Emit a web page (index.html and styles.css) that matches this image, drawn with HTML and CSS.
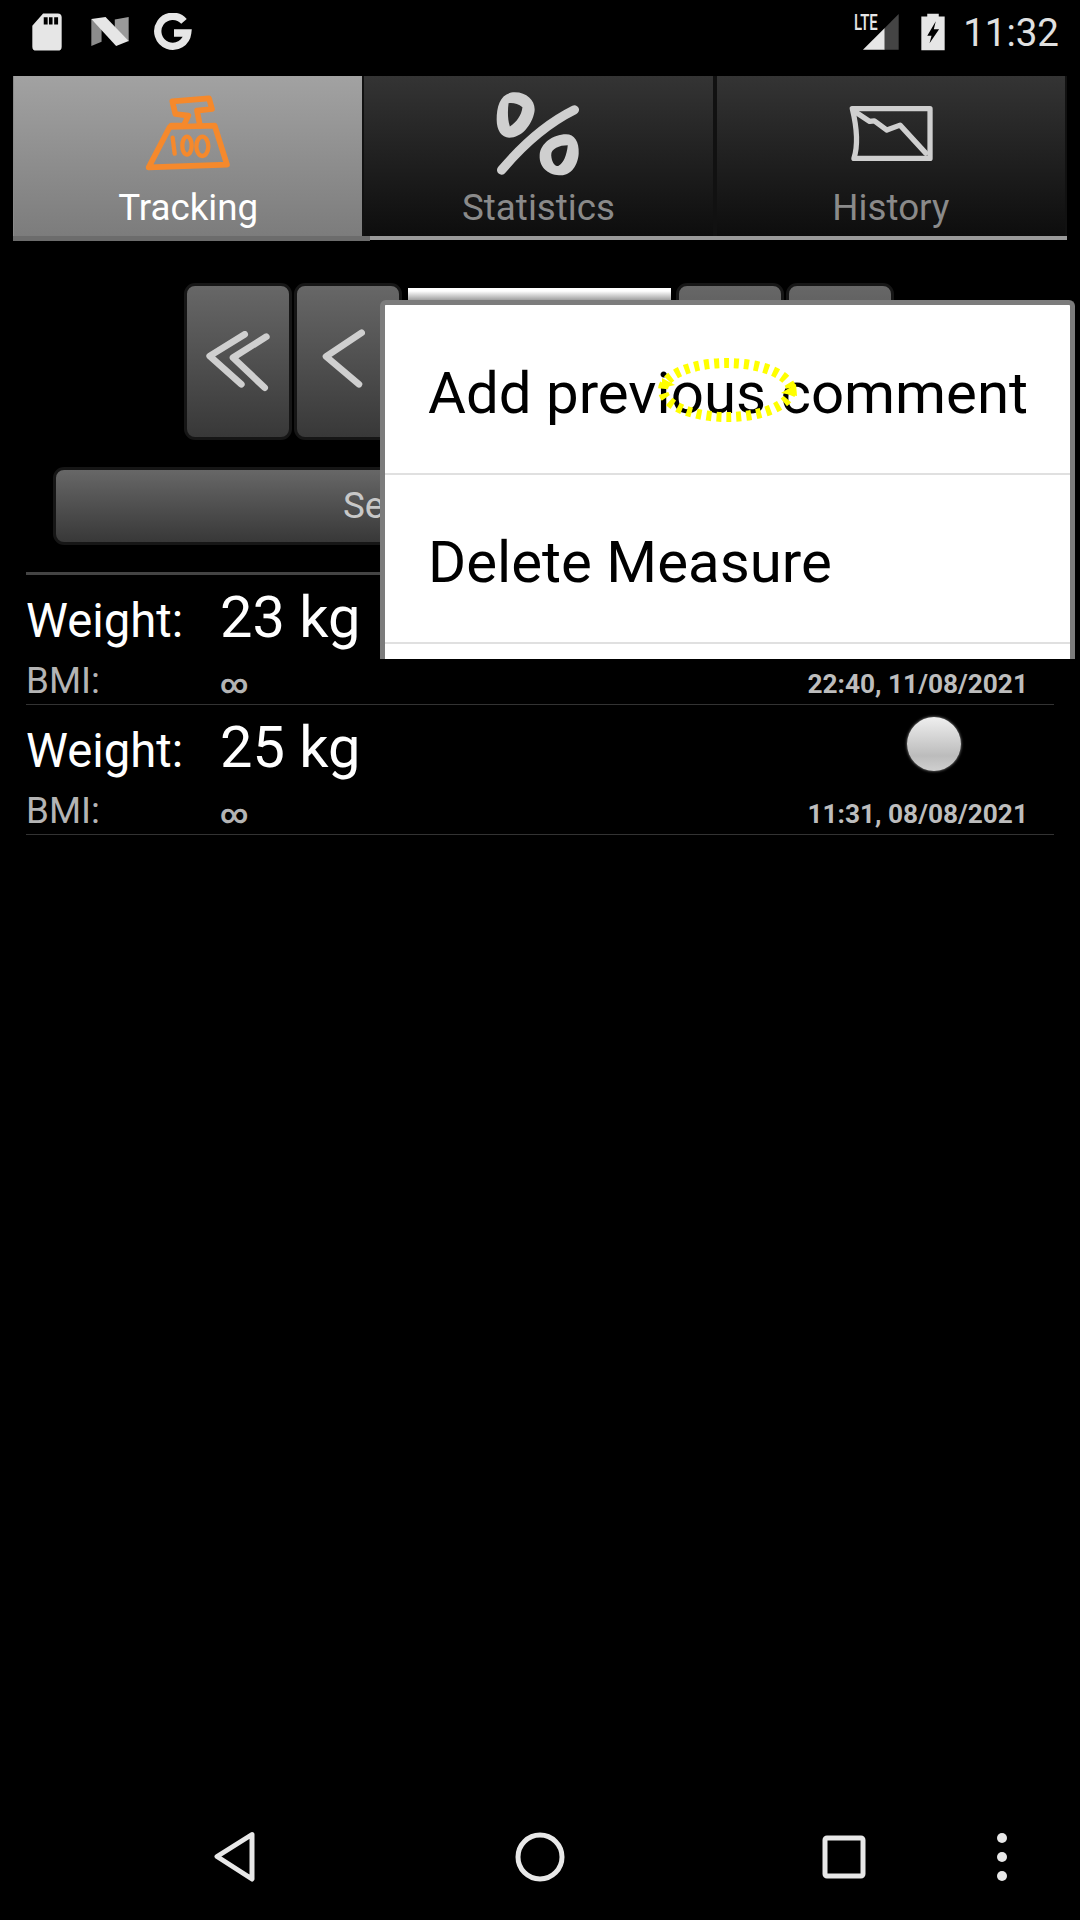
FILE: index.html
```html
<!DOCTYPE html>
<html lang="en">
<head>
  <meta charset="UTF-8" />
  <meta name="viewport" content="width=device-width, initial-scale=1.0"/>
  <title>Weight Tracking</title>
  <link rel="stylesheet" href="styles.css">
</head>
<body>
  <div class="page">
    <div class="status">
      <svg class="st-sd" viewBox="96 38 92 114"><path class="st-fill" fill-rule="evenodd" d="M130 38H175Q187 38 187 50V140Q187 152 175 152H109Q97 152 97 140V76ZM132 50V72H144V50ZM148 50V72H159V50ZM164 50V72H176V50Z"/></svg>
      <svg class="st-n" viewBox="274 50 115 92"><path fill="#8c8c8c" d="M275 58L306 84V127L275 140Z"/><path fill="#9a9a9a" d="M346 60L388 52V126L346 92Z"/><path fill="#e6e6e6" d="M275 58L318 52L388 125L350 140Z"/></svg>
      <svg class="st-g" viewBox="462 37 114 114"><path class="st-g-line" d="M552 62A45 45 0 1 0 563 97H522"/></svg>
      <div class="status-gap"></div>
      <svg class="st-signal" viewBox="525 16 136 134">
        <path fill="#e6e6e6" d="M552 148L618 82V148Z"/>
        <path fill="#444" d="M618 82L660 40V148H618Z"/>
        <text class="st-lte" x="525" y="88" textLength="72" lengthAdjust="spacingAndGlyphs">LTE</text>
      </svg>
      <svg class="st-batt" viewBox="726 36 73 113"><path class="st-fill" d="M745 37H780V45H798V148H727V45H745Z"/><path fill="#000" d="M771 60L745 104H758L752 127L781 84H765Z"/></svg>
      <span class="st-time">11:32</span>
    </div>

    <div class="tabs">
      <div class="tab tab-on">
        <div class="tab-icon">
          <svg width="90" height="80" viewBox="430 285 270 240">
            <g class="ic-orange">
              <path d="M510 384L645 380L682 497L447 505Z"/>
              <path d="M515 380H552L566 350L527 345L518 307L628 298L637 330L592 335L601 380"/>
              <g class="ic-thin">
                <path d="M519 416L525 464"/>
                <ellipse cx="562" cy="440" rx="14" ry="27"/>
                <ellipse cx="608" cy="442" rx="18" ry="29"/>
              </g>
            </g>
          </svg>
        </div>
        <span class="tab-label">Tracking</span>
      </div>
      <div class="tab">
        <div class="tab-icon">
          <svg width="84" height="84" viewBox="468 94 254 254">
            <g class="ic-grey-fill">
              <path fill-rule="evenodd" d="M470 178C470 135 482 95 525 95C565 95 590 125 584 155C576 195 545 232 508 232C485 232 470 210 470 178ZM506 128C503 150 503 178 510 198C530 185 545 165 548 140C535 130 520 126 506 128Z"/>
              <path fill-rule="evenodd" d="M600 285C602 250 640 222 680 222C705 222 720 245 718 280C716 315 695 346 665 346C630 346 598 325 600 285ZM635 285C636 305 645 318 656 318C672 310 682 285 685 255C660 255 634 265 635 285Z"/>
            </g>
            <path class="ic-grey-thick" d="M705 148Q590 205 485 330"/>
          </svg>
        </div>
        <span class="tab-label">Statistics</span>
      </div>
      <div class="tab">
        <div class="tab-icon">
          <svg width="84" height="58" viewBox="505 315 255 174">
            <path class="ic-grey" d="M515 325H751V476H520Q538 420 515 325Z"/>
            <path class="ic-grey" d="M520 332L568 364L582 362L620 390L660 375L738 460"/>
          </svg>
        </div>
        <span class="tab-label">History</span>
      </div>
    </div>

    <div class="steps">
      <div class="btn step">
        <svg width="70" height="62" viewBox="610 190 200 186"><path class="ic-chev" d="M730 200L625 265L720 350"/><path class="ic-chev" d="M795 207L695 270L790 360"/></svg>
      </div>
      <div class="btn step">
        <svg class="chev-one" width="44" height="60" viewBox="970 180 130 175"><path class="ic-chev" d="M1090 190L985 260L1082 342"/></svg>
      </div>
      <div class="type-box">Weight</div>
      <div class="btn step"></div>
      <div class="btn step"></div>
    </div>

    <div class="btn wide"><span>Se</span></div>

    <div class="list">
      <div class="row">
        <div class="line-top"><span class="lbl">Weight:</span><span class="val">23 kg</span></div>
        <div class="line-sub"><span class="lbl-sub">BMI:</span><span class="val-sub">∞</span><span class="date">22:40, 11/08/2021</span></div>
      </div>
      <div class="row">
        <div class="line-top"><span class="lbl">Weight:</span><span class="val">25 kg</span><span class="dot"></span></div>
        <div class="line-sub"><span class="lbl-sub">BMI:</span><span class="val-sub">∞</span><span class="date">11:31, 08/08/2021</span></div>
      </div>
    </div>

    <div class="nav">
      <svg class="nav-back" width="44" height="52" viewBox="0 0 44 52"><path class="nav-line" d="M38 3.500L3 25.500L38 48Z"/></svg>
      <svg class="nav-home" width="50" height="50" viewBox="0 0 50 50"><circle class="nav-line" cx="25" cy="25" r="22"/></svg>
      <svg class="nav-recent" width="44" height="44" viewBox="0 0 44 44"><rect class="nav-line" x="3" y="3" width="38" height="38" rx="2"/></svg>
      <svg class="nav-more" width="10" height="48" viewBox="0 0 10 48"><circle cx="5" cy="5" r="5"/><circle cx="5" cy="24" r="5"/><circle cx="5" cy="43" r="5"/></svg>
    </div>

    <!-- context menu, cut off at the bottom like in the capture -->
    <div class="menu">
      <div class="menu-item">Add previous comment</div>
      <div class="menu-item">Delete Measure</div>
      <div class="menu-item"></div>
    </div>

    <!-- touch marker -->
    <svg class="touch" width="160" height="80" viewBox="0 0 160 80">
      <ellipse cx="77" cy="40" rx="64" ry="27"/>
      <path d="M12 28L25 35L12 38Z"/>
      <path d="M146 34L131 43L147 46Z"/>
    </svg>
  </div>
</body>
</html>
```

FILE: styles.css
```css
* {
  box-sizing: border-box;
}

body {
  margin: 0;
  background: #000;
  font-family: Roboto, "Liberation Sans", sans-serif;
}

.page {
  position: relative;
  width: 1080px;
  height: 1920px;
  overflow: hidden;
  background: #000;
  display: flex;
  flex-direction: column;
}

/* status bar */
.status {
  height: 63px;
  padding-left: 32px;
  display: flex;
  align-items: center;
  flex-shrink: 0;
}

.status-gap {
  flex: 1;
}

.st-fill {
  fill: #e6e6e6;
}

.st-sd {
  width: 30px;
  height: 38px;
}

.st-n {
  width: 38px;
  height: 31px;
  margin-left: 29px;
}

.st-g {
  width: 38px;
  height: 38px;
  margin-left: 25px;
}

.st-g-line {
  fill: none;
  stroke: #e6e6e6;
  stroke-width: 22;
}

.st-signal {
  width: 45px;
  height: 44.500px;
  margin-top: -6px;
}

.st-lte {
  font-family: Roboto, sans-serif;
  font-size: 68px;
  font-weight: 500;
  fill: #e6e6e6;
}

.st-batt {
  width: 24px;
  height: 38px;
  margin-left: 22px;
}

.st-time {
  margin-left: 18px;
  margin-right: 21px;
  margin-top: 2px;
  font-size: 38.500px;
  color: #e0e0e0;
}

/* tabs */
.tabs {
  margin: 13px 13px 0;
  display: flex;
  border-bottom: 4px solid #9a9a9a;
}

.tab {
  flex: 1;
  height: 160px;
  padding-top: 8px;
  display: flex;
  flex-direction: column;
  align-items: center;
  background: linear-gradient(#343434, #0d0d0d);
  border-left: 2px solid #111;
  border-right: 2px solid #111;
}

.tab-on {
  position: relative;
  background: linear-gradient(#a2a2a2, #7c7c7c);
  border: none;
  border-left: 1px solid #8a8a8a;
}

.tab-on::after {
  content: "";
  position: absolute;
  left: -1px;
  right: -8px;
  top: 160px;
  height: 5px;
  background: #6c6c6c;
}

.tab-icon {
  height: 100px;
  display: flex;
  align-items: center;
  justify-content: center;
}

.tab-label {
  margin-top: 2px;
  font-size: 36.750px;
  line-height: 44px;
  color: #8a8a8a;
}

.tab-on .tab-label {
  color: #fff;
}

.ic-orange {
  fill: none;
  stroke: #f5892c;
  stroke-width: 17;
  stroke-linejoin: round;
  stroke-linecap: round;
}

.ic-thin {
  stroke-width: 13;
}

.ic-grey {
  fill: none;
  stroke: #cfcfcf;
  stroke-width: 16;
  stroke-linejoin: round;
  stroke-linecap: round;
}

.ic-grey-fill {
  fill: #cfcfcf;
}

.ic-grey-thick {
  fill: none;
  stroke: #cfcfcf;
  stroke-width: 28;
  stroke-linecap: round;
}

.ic-chev {
  fill: none;
  stroke: #cfcfcf;
  stroke-width: 20;
  stroke-linejoin: round;
  stroke-linecap: round;
}

/* buttons */
.btn {
  background: linear-gradient(#676767, #383838);
  border: 3px solid #161616;
  border-radius: 11px;
}

.steps {
  margin-top: 43px;
  padding-right: 2px;
  display: flex;
  justify-content: center;
  gap: 2px;
}

.step {
  width: 108px;
  height: 157px;
  display: flex;
  align-items: center;
  justify-content: center;
}

.chev-one {
  margin-left: -10px;
  margin-top: -6px;
}

.type-box {
  width: 263px;
  height: 150px;
  margin: 5px 3px 0 4px;
  padding-top: 5px;
  padding-right: 5px;
  text-align: right;
  font-size: 32px;
  color: #222;
  background: linear-gradient(#fff 3px, #8c8c8c 14px);
}

.wide {
  margin: 27px 53px 0;
  height: 78px;
  padding-left: 287px;
  font-size: 36.750px;
  line-height: 72px;
  color: #c8c8c8;
}

/* measures */
.list {
  margin: 27px 26px 0;
  border-top: 3px solid #444;
}

.row {
  height: 130px;
  padding: 10px 26px 0 0;
  border-bottom: 1px solid #333;
}

.line-top {
  height: 64px;
  display: flex;
  align-items: baseline;
}

.lbl {
  width: 194px;
  font-size: 47.250px;
  line-height: 64px;
  color: #fff;
}

.val {
  font-size: 57.750px;
  line-height: 64px;
  color: #fff;
}

.dot {
  align-self: flex-start;
  width: 54px;
  height: 54px;
  margin-top: 2px;
  margin-left: auto;
  margin-right: 67px;
  border-radius: 50%;
  background: linear-gradient(#efefef, #bcbcbc 72%, #cfcfcf);
  box-shadow: 0 0 3px #999;
}

.line-sub {
  height: 44px;
  margin-top: 10px;
  display: flex;
  align-items: baseline;
}

.lbl-sub {
  width: 194px;
  font-size: 36.750px;
  line-height: 44px;
  color: #b4b4b4;
}

.val-sub {
  font-size: 27px;
  font-weight: 700;
  line-height: 44px;
  color: #b4b4b4;
}

.date {
  margin-left: auto;
  font-size: 26.250px;
  font-weight: 700;
  line-height: 44px;
  color: #bdbdbd;
}

/* nav bar */
.nav {
  margin-top: auto;
  height: 126px;
  padding-left: 214px;
  display: flex;
  align-items: center;
  flex-shrink: 0;
}

.nav-line {
  fill: none;
  stroke: #e8e8e8;
  stroke-width: 5;
  stroke-linejoin: round;
}

.nav-home {
  margin-left: 257px;
}

.nav-recent {
  margin-left: 257px;
}

.nav-more {
  margin-left: 131px;
  fill: #e8e8e8;
}

/* context menu */
.menu {
  position: absolute;
  left: 380px;
  top: 300px;
  width: 695px;
  height: 359px;
  padding-top: 1px;
  overflow: hidden;
  background: #fff;
  border: 5px solid #7c7c7c;
  border-bottom: none;
  border-radius: 6px 6px 0 0;
}

.menu-item {
  height: 169px;
  padding: 6px 0 0 43px;
  display: flex;
  align-items: center;
  font-size: 58.200px;
  color: #000;
  border-bottom: 2px solid #e0e0e0;
}

.touch {
  position: absolute;
  left: 650px;
  top: 350px;
}

.touch ellipse {
  fill: none;
  stroke: #ffff00;
  stroke-width: 10;
  stroke-dasharray: 5 5;
}

.touch path {
  fill: #ffff00;
}
```
